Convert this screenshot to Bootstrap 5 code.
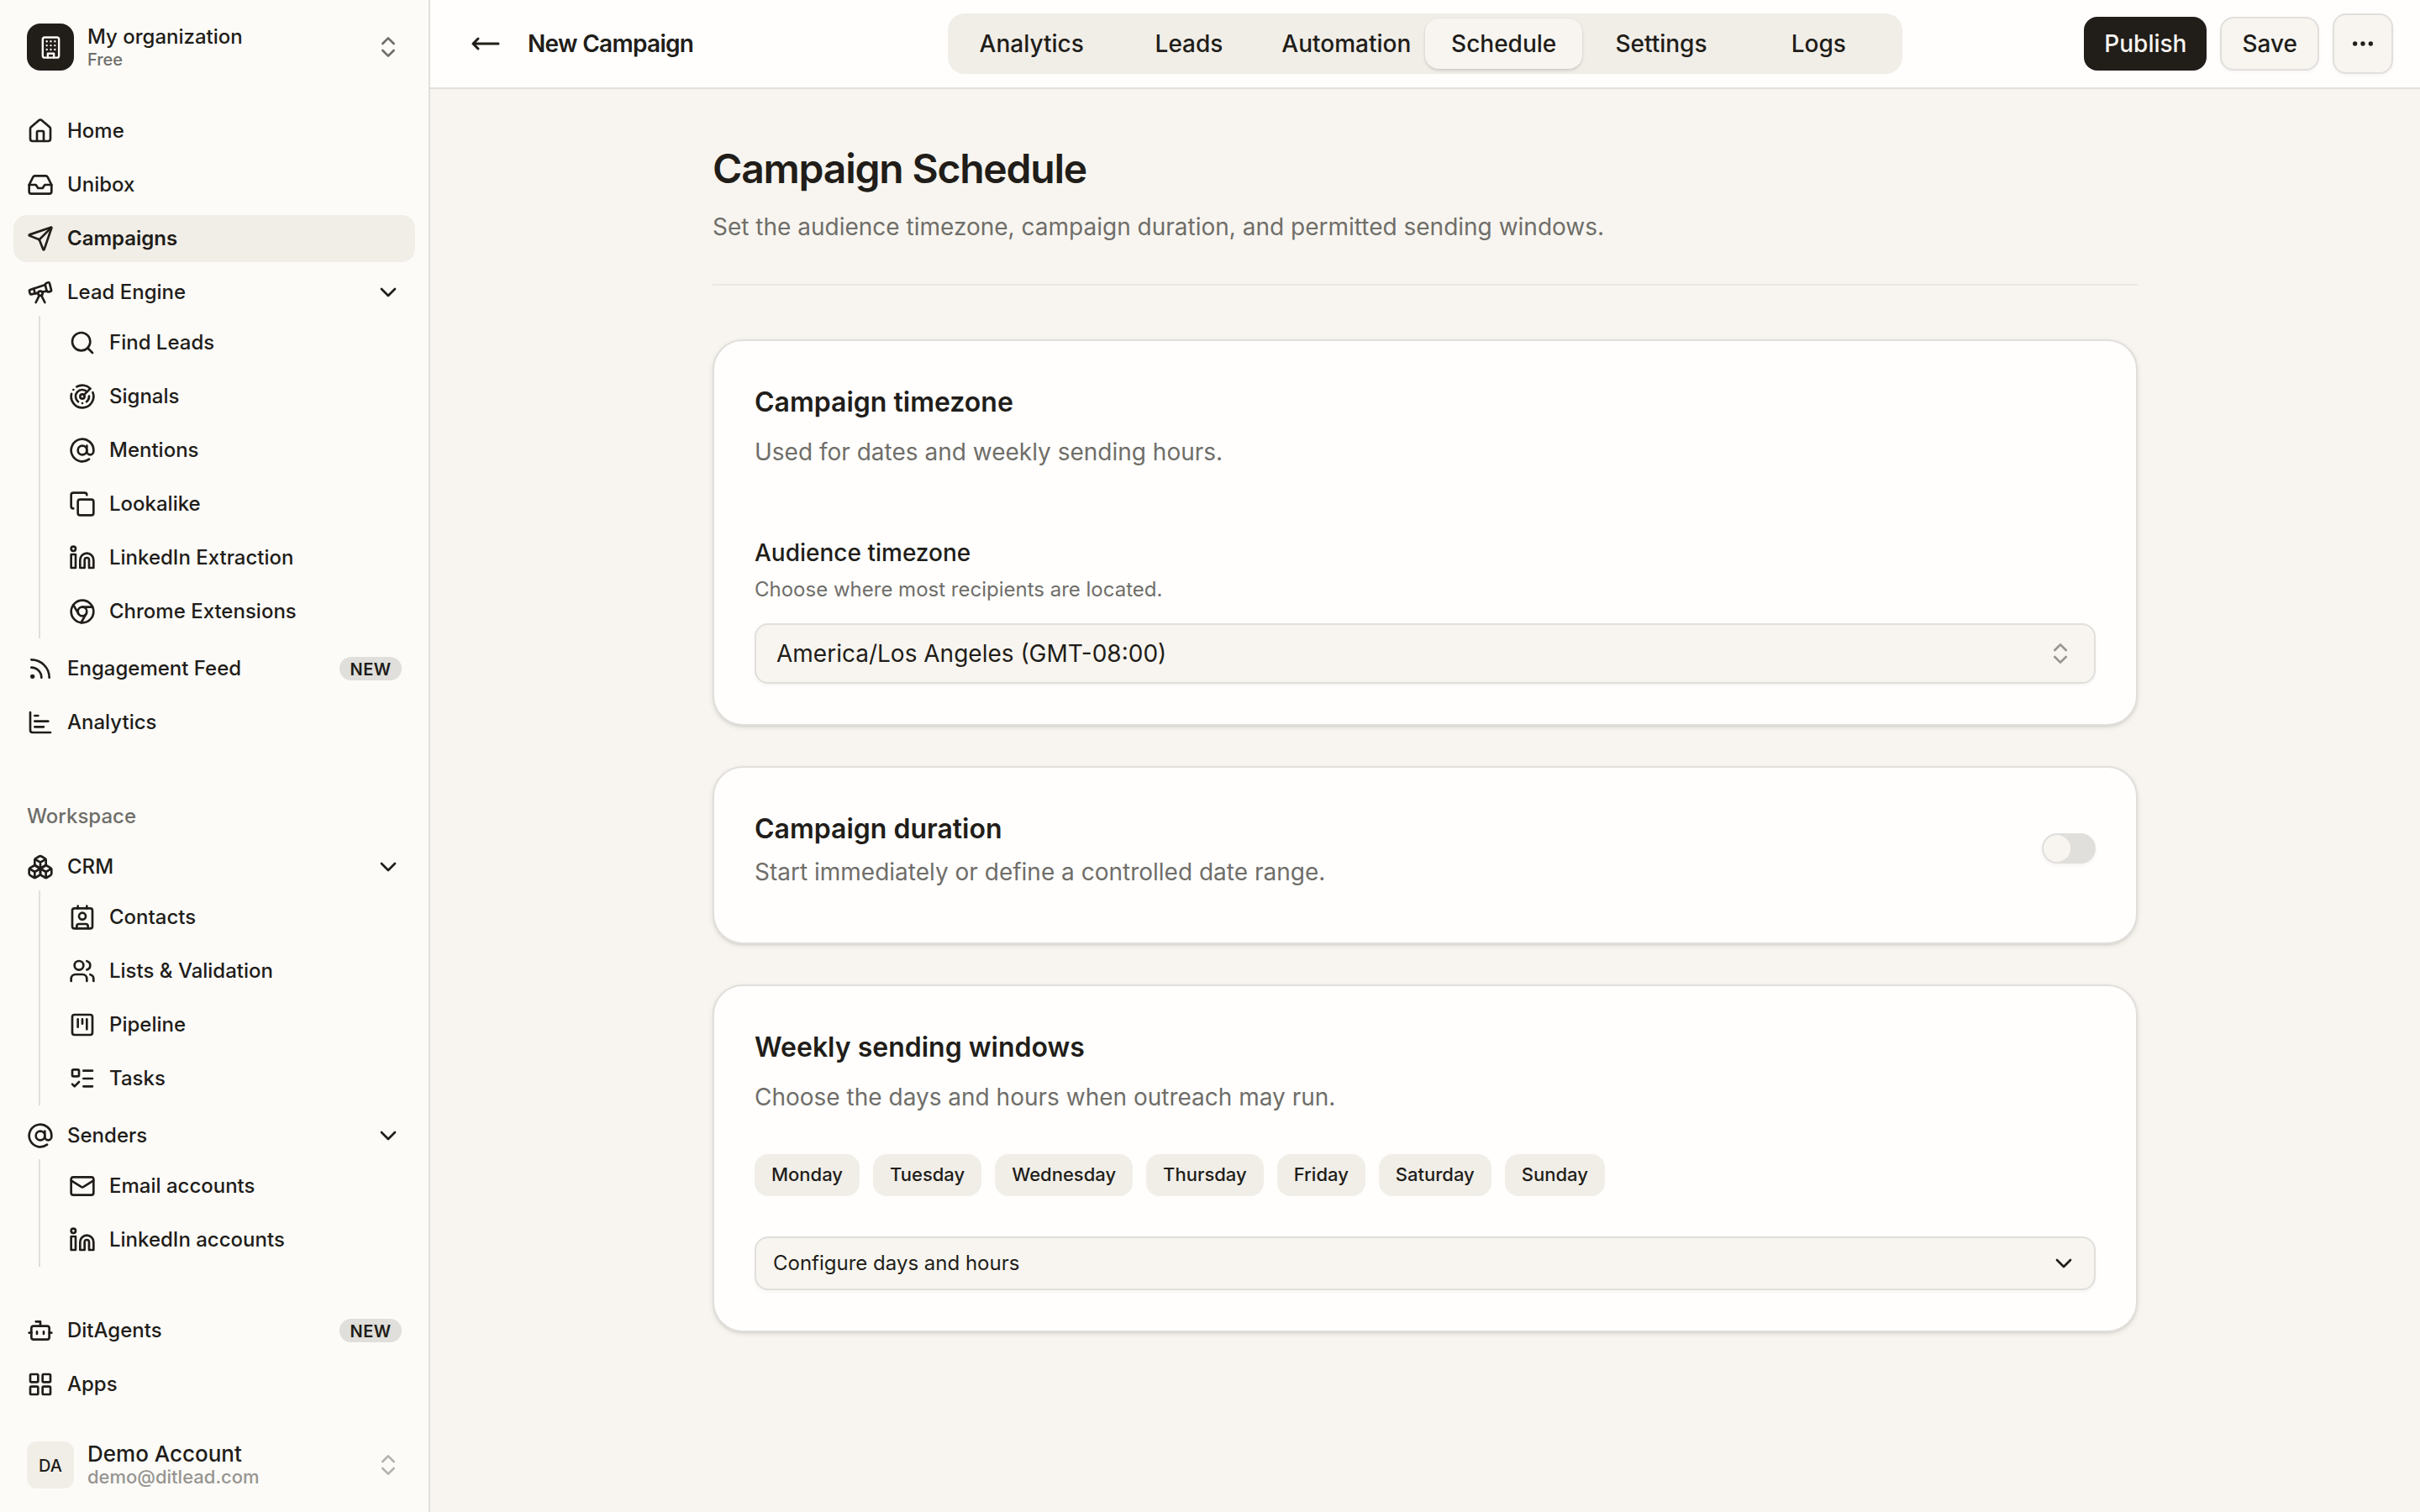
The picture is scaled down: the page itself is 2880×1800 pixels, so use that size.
<!DOCTYPE html>
<html lang="en">
<head>
<meta charset="utf-8">
<meta name="viewport" content="width=device-width, initial-scale=1">
<title>Campaign Schedule</title>
<link href="https://cdn.jsdelivr.net/npm/bootstrap@5.3.0/dist/css/bootstrap.min.css" rel="stylesheet">
<style>
:root{--ink:#211d19;--soft:#6f6e69;--line:#e0dfdb;--page:#f8f5f0;--panel:#fffefd;--side:#fcfbf8;--tint:#f1eee8}
body{font-family:Inter,"Liberation Sans",sans-serif;font-size:28px;line-height:42px;color:var(--ink);background:var(--page);height:1800px;overflow:hidden}
svg.ico{width:32px;height:32px;flex:none;fill:none;stroke:currentColor;stroke-width:2;stroke-linecap:round;stroke-linejoin:round}
.text-soft{color:var(--soft)}
.tight{letter-spacing:-.025em}

/* sidebar */
.sidebar{width:512px;flex:none;background:var(--side);border-right:2px solid var(--line);padding:28px 16px;font-size:24px;font-weight:500;line-height:32px}
.account{height:56px;padding:0 16px;gap:16px}
.tile{width:56px;height:56px;flex:none;border-radius:16px;font-size:20px}
.tile-dark{background:var(--ink);color:var(--side)}
.tile-dark svg.ico{width:29px;height:29px}
.tile-light{background:var(--tint);border-radius:12px;padding-top:2px}
.org-name{line-height:30px}
.org-plan{font-size:20px;line-height:24px}
.user-name{font-size:26px;line-height:32px}
.user-mail{font-size:22px;line-height:23px;margin-bottom:3px;opacity:.72}
.dim{opacity:.5}
.main-menu{margin-top:44px}
.account-foot{margin-top:40px}
.menu{gap:8px}
.menu .nav-link{height:56px;padding:0 16px;gap:16px;border-radius:16px;color:var(--ink)}
.menu .nav-link.active{background:var(--tint);font-weight:600}
.submenu{margin:-8px 0 0 30px;border-left:2px solid var(--line);padding:4px 0 4px 18px;gap:8px}
.menu-label{height:64px;margin-top:44px;padding:0 16px;margin-bottom:-8px}
.pill-new{height:28px;width:74px;padding-top:2px;border-radius:14px;background:var(--line);font-size:20px;font-weight:600;letter-spacing:.02em}

/* top bar */
.topbar{height:106px;background:var(--panel);border-bottom:2px solid var(--line);padding:0 32px 0 48px}
.topbar .side-l{width:568px;gap:32px}
.back svg.ico{width:36px;height:36px}
.tabs{width:1136px;height:72px;padding:6px;background:var(--tint);border-radius:20px;font-weight:500}
.tabs .nav-link{flex:1 1 0;min-width:0;padding:0;height:60px;border-radius:16px;color:var(--ink);white-space:nowrap}
.tabs .nav-link.active{background:var(--page);box-shadow:0 2px 4px rgba(33,29,25,.1),0 2px 3px -1px rgba(33,29,25,.1),0 0 2px rgba(33,29,25,.06)}
.action{height:64px;padding:0 24px;border:2px solid var(--line);border-radius:16px;background:var(--page);color:var(--ink);font-size:28px;font-weight:500;line-height:1;box-shadow:0 2px 4px rgba(33,29,25,.04)}
.action-dark{background:var(--ink);border:0;color:var(--page);box-shadow:none}
.action-more{height:72px;width:72px;padding:0}

/* page */
.page{width:1696px;margin:0 auto;padding-top:65px}
.page-head{padding-bottom:47px;border-bottom:2px solid rgba(224,223,219,.6);margin-bottom:64px}
.page-head h1{font-size:48px;line-height:60px;font-weight:600;margin:0 0 18px}
.panel{background:var(--panel);border:2px solid var(--line);border-radius:36px;padding:49px 48px 48px;margin-bottom:48px;box-shadow:0 2px 6px rgba(33,29,25,.09),0 2px 3px -1px rgba(33,29,25,.11)}
.panel-row{padding-bottom:63px}
.panel h2{font-size:32px;line-height:48px;font-weight:600;margin:0}
.gap-desc{margin-top:14px}
.gap-desc-sm{margin-top:6px}
.field{height:72px;padding:0 24px;border:2px solid var(--line);border-radius:16px;background:var(--page);box-shadow:0 2px 4px rgba(33,29,25,.04)}
.field svg.text-soft{opacity:.7}
.field-sm{height:64px;padding:0 20px;font-size:24px}
.field-label{margin-top:79px;font-weight:500;line-height:40px}
.field-help{font-size:24px;line-height:48px;margin-bottom:16px}
.toggle{width:64px;height:36px;margin-bottom:2px;border-radius:18px;background:var(--line);padding:2px;box-shadow:0 2px 4px rgba(33,29,25,.05)}
.toggle span{width:32px;height:32px;border-radius:50%;background:var(--page)}
.days{gap:16px;margin:47px 0 48px}
.day{height:50px;padding:0 20px 2px;border-radius:16px;background:var(--tint);font-size:22px;font-weight:500}
</style>
</head>
<body class="d-flex">

<svg width="0" height="0" class="position-absolute" aria-hidden="true">
<symbol id="building" viewBox="0 0 24 24"><rect x="4" y="2" width="16" height="20" rx="2"/><path d="M9 22v-4h6v4M8 6h.01M16 6h.01M12 6h.01M12 10h.01M12 14h.01M16 10h.01M16 14h.01M8 10h.01M8 14h.01"/></symbol>
<symbol id="updown" viewBox="0 0 24 24"><path d="m7 15 5 5 5-5M7 9l5-5 5 5"/></symbol>
<symbol id="down" viewBox="0 0 24 24"><path d="m6 9 6 6 6-6"/></symbol>
<symbol id="home" viewBox="0 0 24 24"><path d="M15 21v-8a1 1 0 0 0-1-1h-4a1 1 0 0 0-1 1v8"/><path d="M3 10a2 2 0 0 1 .709-1.528l7-5.999a2 2 0 0 1 2.582 0l7 5.999A2 2 0 0 1 21 10v9a2 2 0 0 1-2 2H5a2 2 0 0 1-2-2z"/></symbol>
<symbol id="inbox" viewBox="0 0 24 24"><path d="M22 12h-6l-2 3h-4l-2-3H2"/><path d="M5.45 5.11 2 12v6a2 2 0 0 0 2 2h16a2 2 0 0 0 2-2v-6l-3.45-6.89A2 2 0 0 0 16.76 4H7.24a2 2 0 0 0-1.79 1.11z"/></symbol>
<symbol id="send" viewBox="0 0 24 24"><path d="M14.536 21.686a.5.5 0 0 0 .937-.024l6.5-19a.496.496 0 0 0-.635-.635l-19 6.5a.5.5 0 0 0-.024.937l7.93 3.18a2 2 0 0 1 1.112 1.11z"/><path d="m21.854 2.147-10.94 10.939"/></symbol>
<symbol id="telescope" viewBox="0 0 24 24"><path d="m10.065 12.493-6.18 1.318a.934.934 0 0 1-1.108-.702l-.537-2.15a1.07 1.07 0 0 1 .691-1.265l13.504-4.44"/><path d="m13.56 11.747 4.332-.924"/><path d="m16 21-3.105-6.21"/><path d="M16.485 5.94a2 2 0 0 1 1.455-2.425l1.09-.272a1 1 0 0 1 1.212.727l1.515 6.06a1 1 0 0 1-.727 1.213l-1.09.272a2 2 0 0 1-2.425-1.455z"/><path d="m6.158 8.633 1.114 4.456"/><path d="m8 21 3.105-6.21"/><circle cx="12" cy="13" r="2"/></symbol>
<symbol id="search" viewBox="0 0 24 24"><path d="m21 21-4.34-4.34"/><circle cx="11" cy="11" r="8"/></symbol>
<symbol id="radar" viewBox="0 0 24 24"><path d="M19.07 4.93A10 10 0 0 0 6.99 3.34M4 6h.01M2.29 9.62A10 10 0 1 0 21.31 8.35M16.24 7.76A6 6 0 1 0 8.23 16.67M12 18h.01M17.99 11.66A6 6 0 0 1 15.77 16.67"/><circle cx="12" cy="12" r="2"/><path d="m13.41 10.59 5.66-5.66"/></symbol>
<symbol id="at" viewBox="0 0 24 24"><circle cx="12" cy="12" r="4"/><path d="M16 8v5a3 3 0 0 0 6 0v-1a10 10 0 1 0-4 8"/></symbol>
<symbol id="copy" viewBox="0 0 24 24"><rect x="8" y="8" width="14" height="14" rx="2"/><path d="M4 16c-1.1 0-2-.9-2-2V4c0-1.1.9-2 2-2h10c1.1 0 2 .9 2 2"/></symbol>
<symbol id="linkedin" viewBox="0 0 24 24"><path d="M16 8a6 6 0 0 1 6 6v7h-4v-7a2 2 0 0 0-2-2 2 2 0 0 0-2 2v7h-4v-7a6 6 0 0 1 6-6z"/><rect x="2" y="9" width="4" height="12"/><circle cx="4" cy="4" r="2"/></symbol>
<symbol id="chrome" viewBox="0 0 24 24"><circle cx="12" cy="12" r="10"/><circle cx="12" cy="12" r="4"/><path d="M21.17 8H12M3.95 6.06 8.54 14M10.88 21.94 15.46 14"/></symbol>
<symbol id="rss" viewBox="0 0 24 24"><path d="M4 11a9 9 0 0 1 9 9M4 4a16 16 0 0 1 16 16"/><circle cx="5" cy="19" r="1"/></symbol>
<symbol id="chart" viewBox="0 0 24 24"><path d="M3 3v16a2 2 0 0 0 2 2h16M7 16h8M7 11h12M7 6h3"/></symbol>
<symbol id="boxes" viewBox="0 0 24 24"><path d="M2.97 12.92A2 2 0 0 0 2 14.63v3.24a2 2 0 0 0 .97 1.71l3 1.8a2 2 0 0 0 2.06 0L12 19v-5.5l-5-3-4.03 2.42Z"/><path d="m7 16.5-4.74-2.85M7 16.5l5-3M7 16.5v5.17"/><path d="M12 13.5V19l3.97 2.38a2 2 0 0 0 2.06 0l3-1.8a2 2 0 0 0 .97-1.71v-3.24a2 2 0 0 0-.97-1.71L17 10.5l-5 3Z"/><path d="m17 16.5-5-3M17 16.5l4.74-2.85M17 16.5v5.17"/><path d="M7.97 4.42A2 2 0 0 0 7 6.13v4.37l5 3 5-3V6.13a2 2 0 0 0-.97-1.71l-3-1.8a2 2 0 0 0-2.06 0l-3 1.8Z"/><path d="M12 8 7.26 5.15M12 8l4.74-2.85M12 13.5V8"/></symbol>
<symbol id="contact" viewBox="0 0 24 24"><path d="M16 2v2M7 22v-2a2 2 0 0 1 2-2h6a2 2 0 0 1 2 2v2M8 2v2"/><circle cx="12" cy="11" r="3"/><rect x="3" y="4" width="18" height="18" rx="2"/></symbol>
<symbol id="users" viewBox="0 0 24 24"><path d="M16 21v-2a4 4 0 0 0-4-4H6a4 4 0 0 0-4 4v2M16 3.128a4 4 0 0 1 0 7.744M22 21v-2a4 4 0 0 0-3-3.87"/><circle cx="9" cy="7" r="4"/></symbol>
<symbol id="kanban" viewBox="0 0 24 24"><rect x="3" y="3" width="18" height="18" rx="2"/><path d="M8 7v7M12 7v4M16 7v9"/></symbol>
<symbol id="todo" viewBox="0 0 24 24"><rect x="3" y="4" width="6" height="6" rx="1"/><path d="m3 17 2 2 4-4M13 5h8M13 12h8M13 19h8"/></symbol>
<symbol id="mail" viewBox="0 0 24 24"><rect x="2" y="4" width="20" height="16" rx="2"/><path d="m22 7-8.991 5.727a2 2 0 0 1-2.009 0L2 7"/></symbol>
<symbol id="bot" viewBox="0 0 24 24"><path d="M12 8V4H8"/><rect x="4" y="8" width="16" height="12" rx="2"/><path d="M2 14h2M20 14h2M15 13v2M9 13v2"/></symbol>
<symbol id="grid" viewBox="0 0 24 24"><rect x="3" y="3" width="7" height="7" rx="1"/><rect x="14" y="3" width="7" height="7" rx="1"/><rect x="14" y="14" width="7" height="7" rx="1"/><rect x="3" y="14" width="7" height="7" rx="1"/></symbol>
<symbol id="arrow" viewBox="0 0 24 24"><path d="M6 8 2 12l4 4M2 12h20"/></symbol>
<symbol id="dots" viewBox="0 0 24 24"><circle cx="12" cy="12" r="1"/><circle cx="19" cy="12" r="1"/><circle cx="5" cy="12" r="1"/></symbol>
</svg>

<aside class="sidebar d-flex flex-column vh-100">
  <div class="account d-flex align-items-center">
    <div class="tile tile-dark d-flex align-items-center justify-content-center"><svg class="ico"><use href="#building"/></svg></div>
    <div class="flex-grow-1"><div class="org-name">My organization</div><div class="org-plan text-soft">Free</div></div>
    <svg class="ico text-soft"><use href="#updown"/></svg>
  </div>

  <nav class="menu main-menu nav flex-column flex-nowrap flex-grow-1">
    <a class="nav-link d-flex align-items-center" href="#"><svg class="ico"><use href="#home"/></svg>Home</a>
    <a class="nav-link d-flex align-items-center" href="#"><svg class="ico"><use href="#inbox"/></svg>Unibox</a>
    <a class="nav-link active d-flex align-items-center" href="#"><svg class="ico"><use href="#send"/></svg>Campaigns</a>
    <a class="nav-link d-flex align-items-center" href="#"><svg class="ico"><use href="#telescope"/></svg>Lead Engine<svg class="ico ms-auto"><use href="#down"/></svg></a>
    <div class="submenu d-flex flex-column">
      <a class="nav-link d-flex align-items-center" href="#"><svg class="ico"><use href="#search"/></svg>Find Leads</a>
      <a class="nav-link d-flex align-items-center" href="#"><svg class="ico"><use href="#radar"/></svg>Signals</a>
      <a class="nav-link d-flex align-items-center" href="#"><svg class="ico"><use href="#at"/></svg>Mentions</a>
      <a class="nav-link d-flex align-items-center" href="#"><svg class="ico"><use href="#copy"/></svg>Lookalike</a>
      <a class="nav-link d-flex align-items-center" href="#"><svg class="ico"><use href="#linkedin"/></svg>LinkedIn Extraction</a>
      <a class="nav-link d-flex align-items-center" href="#"><svg class="ico"><use href="#chrome"/></svg>Chrome Extensions</a>
    </div>
    <a class="nav-link d-flex align-items-center" href="#"><svg class="ico"><use href="#rss"/></svg>Engagement Feed<span class="pill-new ms-auto d-flex align-items-center justify-content-center">NEW</span></a>
    <a class="nav-link d-flex align-items-center" href="#"><svg class="ico"><use href="#chart"/></svg>Analytics</a>
    <div class="menu-label text-soft d-flex align-items-center">Workspace</div>
    <a class="nav-link d-flex align-items-center" href="#"><svg class="ico"><use href="#boxes"/></svg>CRM<svg class="ico ms-auto"><use href="#down"/></svg></a>
    <div class="submenu d-flex flex-column">
      <a class="nav-link d-flex align-items-center" href="#"><svg class="ico"><use href="#contact"/></svg>Contacts</a>
      <a class="nav-link d-flex align-items-center" href="#"><svg class="ico"><use href="#users"/></svg>Lists &amp; Validation</a>
      <a class="nav-link d-flex align-items-center" href="#"><svg class="ico"><use href="#kanban"/></svg>Pipeline</a>
      <a class="nav-link d-flex align-items-center" href="#"><svg class="ico"><use href="#todo"/></svg>Tasks</a>
    </div>
    <a class="nav-link d-flex align-items-center" href="#"><svg class="ico"><use href="#at"/></svg>Senders<svg class="ico ms-auto"><use href="#down"/></svg></a>
    <div class="submenu d-flex flex-column">
      <a class="nav-link d-flex align-items-center" href="#"><svg class="ico"><use href="#mail"/></svg>Email accounts</a>
      <a class="nav-link d-flex align-items-center" href="#"><svg class="ico"><use href="#linkedin"/></svg>LinkedIn accounts</a>
    </div>
    <a class="nav-link d-flex align-items-center mt-auto" href="#"><svg class="ico"><use href="#bot"/></svg>DitAgents<span class="pill-new ms-auto d-flex align-items-center justify-content-center">NEW</span></a>
    <a class="nav-link d-flex align-items-center" href="#"><svg class="ico"><use href="#grid"/></svg>Apps</a>
  </nav>

  <div class="account account-foot d-flex align-items-center">
    <div class="tile tile-light d-flex align-items-center justify-content-center">DA</div>
    <div class="flex-grow-1"><div class="user-name">Demo Account</div><div class="user-mail text-soft">demo@ditlead.com</div></div>
    <svg class="ico text-soft dim"><use href="#updown"/></svg>
  </div>
</aside>

<div class="flex-grow-1">
  <header class="topbar d-flex align-items-center">
    <div class="side-l d-flex align-items-center">
      <a href="#" class="back text-reset d-flex"><svg class="ico"><use href="#arrow"/></svg></a>
      <span class="fw-semibold tight">New Campaign</span>
    </div>
    <nav class="tabs nav flex-nowrap">
      <a class="nav-link d-flex align-items-center justify-content-center" href="#">Analytics</a>
      <a class="nav-link d-flex align-items-center justify-content-center" href="#">Leads</a>
      <a class="nav-link d-flex align-items-center justify-content-center" href="#">Automation</a>
      <a class="nav-link active d-flex align-items-center justify-content-center" href="#">Schedule</a>
      <a class="nav-link d-flex align-items-center justify-content-center" href="#">Settings</a>
      <a class="nav-link d-flex align-items-center justify-content-center" href="#">Logs</a>
    </nav>
    <div class="d-flex align-items-center gap-3 ms-auto">
      <button type="button" class="btn action action-dark">Publish</button>
      <button type="button" class="btn action">Save</button>
      <button type="button" class="btn action action-more d-flex align-items-center justify-content-center" aria-label="More"><svg class="ico"><use href="#dots"/></svg></button>
    </div>
  </header>

  <main class="page">
    <div class="page-head">
      <h1 class="tight">Campaign Schedule</h1>
      <p class="mb-0 text-soft">Set the audience timezone, campaign duration, and permitted sending windows.</p>
    </div>

    <section class="panel">
      <h2>Campaign timezone</h2>
      <p class="mb-0 gap-desc text-soft">Used for dates and weekly sending hours.</p>
      <div class="field-label">Audience timezone</div>
      <div class="field-help text-soft">Choose where most recipients are located.</div>
      <div class="field d-flex align-items-center justify-content-between">America/Los Angeles (GMT-08:00)<svg class="ico text-soft"><use href="#updown"/></svg></div>
    </section>

    <section class="panel panel-row d-flex align-items-center justify-content-between">
      <div>
        <h2>Campaign duration</h2>
        <p class="mb-0 gap-desc-sm text-soft">Start immediately or define a controlled date range.</p>
      </div>
      <div class="toggle d-flex" role="switch" aria-checked="false"><span></span></div>
    </section>

    <section class="panel">
      <h2>Weekly sending windows</h2>
      <p class="mb-0 gap-desc text-soft">Choose the days and hours when outreach may run.</p>
      <div class="days d-flex">
        <span class="day d-flex align-items-center">Monday</span>
        <span class="day d-flex align-items-center">Tuesday</span>
        <span class="day d-flex align-items-center">Wednesday</span>
        <span class="day d-flex align-items-center">Thursday</span>
        <span class="day d-flex align-items-center">Friday</span>
        <span class="day d-flex align-items-center">Saturday</span>
        <span class="day d-flex align-items-center">Sunday</span>
      </div>
      <div class="field field-sm d-flex align-items-center justify-content-between">Configure days and hours<svg class="ico"><use href="#down"/></svg></div>
    </section>
  </main>
</div>

<script src="https://cdn.jsdelivr.net/npm/bootstrap@5.3.0/dist/js/bootstrap.bundle.min.js"></script>
</body>
</html>
